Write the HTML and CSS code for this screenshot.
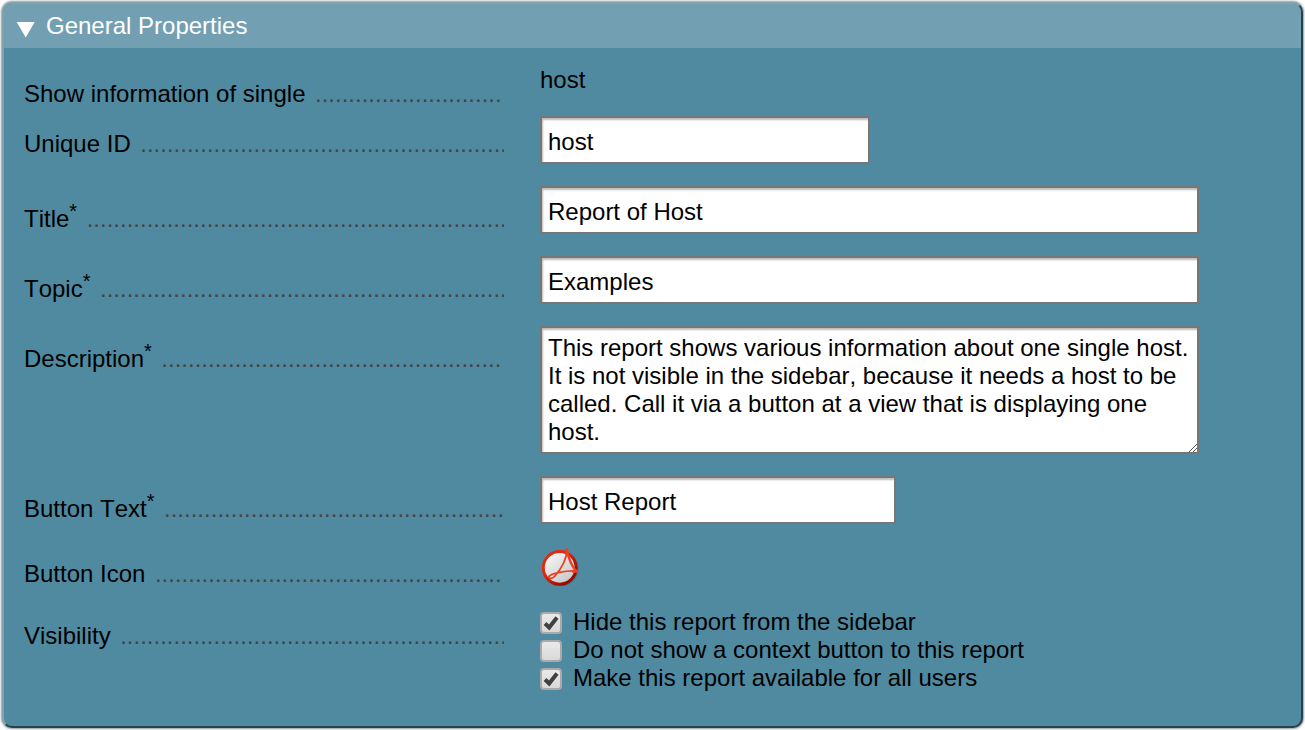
FILE: index.html
```html
<!DOCTYPE html>
<html lang="en">
<head>
<meta charset="utf-8">
<title>General Properties</title>
<link rel="stylesheet" href="styles.css">
</head>
<body>
<section class="panel">
  <header class="panel-head">
    <svg class="arrow" width="20" height="16" viewBox="0 0 20 16"><path d="M.7 0h18l-9 15.500z" fill="#fff"/></svg>
    <span>General Properties</span>
  </header>
  <div class="form">
    <div class="row first"><div class="label"><span>Show information of single</span><span class="dots">............................</span></div><div class="value">host</div></div>
    <div class="row"><div class="label"><span>Unique ID</span><span class="dots">.......................................................</span></div><div class="value"><div class="field small">host</div></div></div>
    <div class="row"><div class="label req"><span>Title<sup>*</sup></span><span class="dots">...............................................................</span></div><div class="value"><div class="field">Report of Host</div></div></div>
    <div class="row"><div class="label req"><span>Topic<sup>*</sup></span><span class="dots">.............................................................</span></div><div class="value"><div class="field">Examples</div></div></div>
    <div class="row tall"><div class="label req"><span>Description<sup>*</sup></span><span class="dots">...................................................</span></div><div class="value"><div class="field area">This report shows various information about one single host.<br>It is not visible in the sidebar, because it needs a host to be<br>called. Call it via a button at a view that is displaying one<br>host.<svg class="grip" width="10" height="10" viewBox="0 0 10 10"><path d="M1 9L9 1M5 9L9 5" stroke="#555" fill="none"/></svg></div></div></div>
    <div class="row"><div class="label req"><span>Button Text<sup>*</sup></span><span class="dots">...................................................</span></div><div class="value"><div class="field medium">Host Report</div></div></div>
    <div class="row icon-row"><div class="label"><span>Button Icon</span><span class="dots">....................................................</span></div><div class="value">
      <svg class="pdf" width="40" height="40" viewBox="0 0 40 40">
        <defs>
          <linearGradient id="ring" x1="0" y1="0" x2="1" y2="1"><stop offset=".35" stop-color="#e32a10"/><stop offset=".8" stop-color="#980b05"/></linearGradient>
          <linearGradient id="disc" x1="0" y1="0" x2=".8" y2="1"><stop offset="0" stop-color="#fff"/><stop offset="1" stop-color="#c4c4c4"/></linearGradient>
        </defs>
        <circle cx="20.500" cy="22.500" r="18" fill="#244b59" opacity=".3"/>
        <circle cx="19.700" cy="21.800" r="16.400" fill="url(#disc)" stroke="url(#ring)" stroke-width="3"/>
        <g fill="none" stroke="#ee3e22" stroke-linecap="round" stroke-linejoin="round">
          <path d="M27 4C26.500 13 21 23 15 30C12 33.500 8 32.500 9 30.500C11 27.500 26 24.500 35.500 25" stroke-width="1.800"/>
          <path d="M27 4.500C28.500 12 31 19 36 25" stroke-width="2.300"/>
          <path d="M26.500 3.500L27 8M33.500 25.500L36.500 25" stroke-width="3"/>
        </g>
      </svg>
    </div></div>
    <div class="row last"><div class="label"><span>Visibility</span><span class="dots">..........................................................</span></div><div class="value">
      <div class="option"><span class="box"><svg width="18" height="18" viewBox="0 0 18 18"><path d="M3 9.500L7.200 13.500L15 3.500" fill="none" stroke="#414143" stroke-width="4"/></svg></span>Hide this report from the sidebar</div>
      <div class="option"><span class="box"></span>Do not show a context button to this report</div>
      <div class="option"><span class="box"><svg width="18" height="18" viewBox="0 0 18 18"><path d="M3 9.500L7.200 13.500L15 3.500" fill="none" stroke="#414143" stroke-width="4"/></svg></span>Make this report available for all users</div>
    </div></div>
  </div>
</section>
</body>
</html>
```
FILE: styles.css
```css
* { box-sizing: border-box; }
body { margin: 0; padding: 2px; background: #fff; font: 24px/28px "Liberation Sans", Arial, sans-serif; font-kerning: none; color: #000; overflow: hidden; }
.panel {
  width: 1301px; height: 726px; overflow: hidden;
  background: #508aa0;
  border: 2px solid; border-color: #7fa3b0 #24414e #24414e #7fa3b0;
  border-radius: 10px;
  box-shadow: 0 0 2px 1px #999;
}
.panel-head { display: flex; align-items: center; height: 44px; padding: 0 0 0 12px; gap: 10px; background: #739fb3; color: #fff; }
.arrow { margin-top: 7px; }
.form { padding: 12px 0 0 20px; }
.row { display: flex; height: 70px; }
.row.first { height: 50px; }
.row.tall { height: 150px; }
.row.icon-row { height: 62px; }
.row.last { height: 110px; }
.label { display: flex; gap: 9.500px; width: 480px; margin: 20px 36px 0 0; height: 28px; overflow: hidden; white-space: nowrap; }
.label.req { margin-top: 18px; padding-top: 7px; height: 35px; }
.label sup { font-size: 20px; line-height: 0; vertical-align: 9px; }
.dots { color: #444; }
.value { padding-top: 6px; }
.field {
  width: 659px; height: 48px; padding: 10px 6px 6px; background: #fff; border: 2px solid #777;
  box-shadow: inset 1px 2px 2px #bbb; white-space: nowrap; position: relative;
}
.field.small { width: 330px; }
.field.medium { width: 356px; }
.field.area { height: 128px; padding-top: 6px; }
.grip { position: absolute; right: -1px; bottom: -1px; }
.pdf { display: block; }
.option { display: flex; align-items: center; gap: 11px; }
.box {
  width: 22px; height: 22px; margin-top: 2px; border: 2px solid #aaa; border-radius: 4px;
  background: linear-gradient(#eaeaea, #d9d9d9);
}
.box svg { display: block; }
```
